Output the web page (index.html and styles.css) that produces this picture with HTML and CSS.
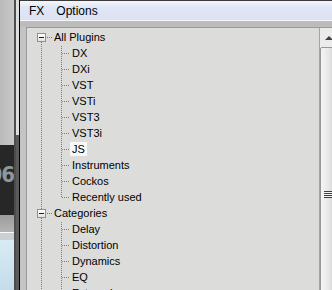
FILE: index.html
```html
<!DOCTYPE html>
<html lang="en">
<head>
<meta charset="UTF-8">
<title>FX Browser</title>
<link rel="stylesheet" href="styles.css">
</head>
<body>
<div class="desk">
    <div class="app">
        <div class="app-top"></div>
        <div class="app-dark"><span>06</span></div>
        <div class="app-grey"></div>
        <div class="app-hl"></div>
        <div class="app-mid"></div>
        <div class="app-blue"></div>
    </div>
    <div class="desk-bar"></div>
    <div class="desk-track"><div class="track-thumb"></div></div>
    <div class="desk-line"></div>
</div>

<div class="window">
    <div class="menubar">
        <span class="menu">FX</span>
        <span class="menu">Options</span>
    </div>
    <div class="menu-rule"></div>
    <div class="frame">
        <div class="panel">
            <div class="tree">
                <ul class="roots">
                    <li>
                        <div class="row"><span class="box"></span><span class="hline"></span><span class="label">All Plugins</span></div>
                        <ul class="kids">
                            <li class="row"><span class="hline"></span><span class="label">DX</span></li>
                            <li class="row"><span class="hline"></span><span class="label">DXi</span></li>
                            <li class="row"><span class="hline"></span><span class="label">VST</span></li>
                            <li class="row"><span class="hline"></span><span class="label">VSTi</span></li>
                            <li class="row"><span class="hline"></span><span class="label">VST3</span></li>
                            <li class="row"><span class="hline"></span><span class="label">VST3i</span></li>
                            <li class="row"><span class="hline"></span><span class="label selected">JS</span></li>
                            <li class="row"><span class="hline"></span><span class="label">Instruments</span></li>
                            <li class="row"><span class="hline"></span><span class="label">Cockos</span></li>
                            <li class="row"><span class="hline"></span><span class="label">Recently used</span></li>
                        </ul>
                    </li>
                    <li>
                        <div class="row"><span class="box"></span><span class="hline"></span><span class="label">Categories</span></div>
                        <ul class="kids">
                            <li class="row"><span class="hline"></span><span class="label">Delay</span></li>
                            <li class="row"><span class="hline"></span><span class="label">Distortion</span></li>
                            <li class="row"><span class="hline"></span><span class="label">Dynamics</span></li>
                            <li class="row"><span class="hline"></span><span class="label">EQ</span></li>
                            <li class="row"><span class="hline"></span><span class="label">External</span></li>
                            <li class="row"><span class="hline"></span><span class="label">Filter</span></li>
                        </ul>
                    </li>
                </ul>
            </div>
            <div class="vscroll">
                <div class="scroll-up"><span class="arrow"></span></div>
                <div class="thumb"><span class="grip"></span></div>
            </div>
        </div>
    </div>
</div>
</body>
</html>
```

FILE: styles.css
```css
body {
    margin: 0;
    padding: 0;
    width: 332px;
    height: 290px;
    overflow: hidden;
    display: flex;
    background: #c0c0c0;
}

/* the other app showing behind the window */
.desk {
    display: flex;
    width: 20px;
    flex-shrink: 0;
}
.app {
    width: 14px;
    display: flex;
    flex-direction: column;
}
.app > div {
    flex-shrink: 0;
}
.app-top {
    height: 145px;
    background: linear-gradient(to right, #bababa, #c8c8c8);
}
.app-dark {
    height: 70px;
    background: #272727;
    display: flex;
    justify-content: flex-end;
    overflow: hidden;
}
.app-dark span {
    font: bold 22px "Liberation Sans Narrow", "DejaVu Sans Condensed", sans-serif;
    color: #8f979d;
    margin-top: 17px;
    letter-spacing: -1px;
}
.app-grey {
    height: 17px;
    background: linear-gradient(#9c9c9c, #b4b4b4);
}
.app-hl {
    height: 1px;
    background: #fafafa;
}
.app-mid {
    height: 7px;
    background: #c9d1d5;
}
.app .app-blue {
    flex: 1 1 auto;
    background: linear-gradient(#d8ebf4, #c4dde9);
}
.desk-bar {
    width: 2px;
    background: #4c4c4c;
}
.desk-track {
    width: 3px;
    background: #dedede;
    display: flex;
    flex-direction: column;
}
.track-thumb {
    margin-top: 135px;
    flex: 1;
    background: #5a5a5a;
}
.desk-line {
    width: 1px;
    background: #000;
}

/* FX browser window */
.window {
    width: 317px;
    flex-shrink: 0;
    display: flex;
    flex-direction: column;
    border-top: 1px solid #3a3a3a;
}
.menubar {
    height: 19px;
    flex-shrink: 0;
    display: flex;
    align-items: center;
    padding-left: 3px;
    background: linear-gradient(#f4f6fb, #e0e6f5 35%, #dbe2f3);
    font: 12px "Liberation Sans", Arial, sans-serif;
    color: #000;
}
.menu {
    padding: 0 6px;
}
.menu-rule {
    height: 7px;
    flex-shrink: 0;
    border-top: 1px solid #f6f6f6;
    background: #bcbcbc;
    box-sizing: border-box;
}
.frame {
    flex: 1;
    min-height: 0;
    display: flex;
    padding-left: 6px;
    background: #c4c4c4;
}
.panel {
    flex: 1;
    display: flex;
    border-top: 1px solid #9a9a9a;
    border-left: 1px solid #9a9a9a;
}

.tree {
    flex: 1;
    background: #dcdddb;
    padding-top: 1px;
    overflow: hidden;
    font: 11px "Liberation Sans", Arial, sans-serif;
    color: #000;
}
.tree ul {
    list-style: none;
    margin: 0;
    padding: 0;
}
.roots {
    background: repeating-linear-gradient(#7c7c7c 0 1px, transparent 1px 2px) 14px 13px / 1px 100% no-repeat;
}
.kids {
    background: repeating-linear-gradient(#7c7c7c 0 1px, transparent 1px 2px) 34px 1px / 1px calc(100% - 9px) no-repeat;
}
.row {
    height: 16px;
    display: flex;
    align-items: center;
}
.box {
    width: 9px;
    height: 9px;
    margin: 1px 0 0 10px;
    box-sizing: border-box;
    border: 1px solid #8e8f8f;
    background: linear-gradient(#ffffff, #e4e4e4);
    display: flex;
    align-items: center;
    justify-content: center;
}
.box::before {
    content: "";
    width: 5px;
    height: 1px;
    background: #1e1e1e;
}
.hline {
    width: 5px;
    height: 1px;
    margin-left: 1px;
    background: repeating-linear-gradient(to right, #7c7c7c 0 1px, transparent 1px 2px);
}
.kids .hline {
    width: 8px;
    margin-left: 35px;
}
.label {
    height: 14px;
    line-height: 14px;
    padding: 0 2px;
    white-space: nowrap;
}
.label.selected {
    background: #f7f7f7;
}

/* scrollbar, cut off by the screen edge */
.vscroll {
    width: 17px;
    flex-shrink: 0;
    border-left: 1px solid #a3a3a3;
    background: #ebebeb;
    display: flex;
    flex-direction: column;
}
.scroll-up {
    height: 19px;
    flex-shrink: 0;
    display: flex;
    justify-content: center;
    align-items: center;
}
.arrow {
    width: 0;
    height: 0;
    border-left: 4px solid transparent;
    border-right: 4px solid transparent;
    border-bottom: 4px solid #404040;
}
.thumb {
    height: 294px;
    flex-shrink: 0;
    margin-right: 1px;
    box-sizing: border-box;
    border: 1px solid #979797;
    border-radius: 2px;
    background: linear-gradient(to right, #f5f5f5, #e8e8e8 50%, #d4d4d4);
    display: flex;
    justify-content: center;
    align-items: center;
}
.grip {
    width: 8px;
    height: 7px;
    background: repeating-linear-gradient(#3f3f3f 0 1px, #f4f4f4 1px 2px);
}
```
